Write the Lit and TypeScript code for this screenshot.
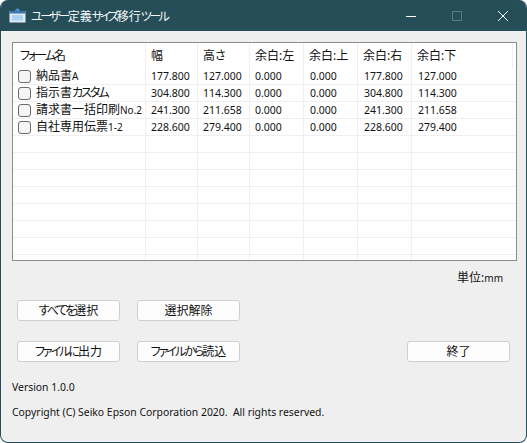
import { LitElement, html, css } from "lit";
import { customElement } from "lit/decorators.js";

const COLS = ["フォーム名", "幅", "高さ", "余白:左", "余白:上", "余白:右", "余白:下"];
const ROWS: [string, string, string[]][] = [
  ["納品書", "A", ["177.800", "127.000", "0.000", "0.000", "177.800", "127.000"]],
  ["指示書カスタム", "", ["304.800", "114.300", "0.000", "0.000", "304.800", "114.300"]],
  ["請求書一括印刷", "No.2", ["241.300", "211.658", "0.000", "0.000", "241.300", "211.658"]],
  ["自社専用伝票", "1-2", ["228.600", "279.400", "0.000", "0.000", "228.600", "279.400"]],
];
const BLANK = 8;

/* The reference UI font has narrow kana: tighten only the kana runs. */
const jp = (s: string) =>
  s.split(/([\u3040-\u30ff]+)/).map((part) =>
    /^[\u3040-\u30ff]/.test(part) ? html`<span class="k">${part}</span>` : part
  );

@customElement("app-root")
export class AppRoot extends LitElement {
  static styles = css`
    :host {
      display: block;
      width: 527px;
      height: 443px;
      background: #fff;
      font-family: "Noto Sans", "Noto Sans CJK JP", sans-serif;
      font-size: 10.4px;
      color: #111;
      font-feature-settings: "palt";
    }
    .k { letter-spacing: -2px; }
    .window {
      box-sizing: border-box;
      width: 527px;
      height: 443px;
      border: 1px solid #264e58;
      border-top: none;
      border-radius: 8px;
      background: #efefef;
      overflow: hidden;
      display: flex;
      flex-direction: column;
    }
    .titlebar {
      height: 31px;
      flex: none;
      background: #264e58;
      display: flex;
      align-items: center;
      color: #fff;
      padding-left: 8px;
    }
    .titlebar svg.app { flex: none; width: 17px; height: 15px; }
    .title { margin-left: 5px; font-size: 12px; color: #f4f7f8; flex: 1; }
    .title .k { letter-spacing: -2.5px; }
    .wbtn { flex: none; width: 46px; height: 31px; display: flex; align-items: center; justify-content: center; }
    .content {
      flex: 1;
      display: flex;
      flex-direction: column;
      padding: 11px 10px 0 11px;
    }
    .table {
      box-sizing: border-box;
      height: 219px;
      width: 505px;
      border: 1px solid #8c8c8c;
      background: #fff;
      overflow: hidden;
    }
    .row {
      display: grid;
      grid-template-columns: 133px 52px 52px 54px 54px 54px 101px;
      height: 17px;
      border-bottom: 1px solid #efefef;
      box-sizing: border-box;
    }
    .row.head { height: 25px; border-bottom: none; }
    .cell {
      border-right: 1px solid #efefef;
      padding-left: 6px;
      line-height: 17px;
      white-space: nowrap;
      overflow: hidden;
    }
    .row:not(.head) .cell:last-child { border-right: none; }
    .head .cell { line-height: 26px; font-size: 12px; padding-left: 5px; }
    .head .cell:first-child { padding-left: 7px; }
    .cell.num { padding-left: 5px; font-size: 10.5px; }
    .cell.num:nth-child(n + 5) { padding-left: 6px; }
    .name { display: flex; align-items: center; gap: 5px; padding-left: 5px; font-size: 12px; }
    .name small { font-size: 10px; }
    .check {
      box-sizing: border-box;
      flex: none;
      width: 13px;
      height: 13px;
      border: 1px solid #6b6b6b;
      border-radius: 3px;
      background: #f5f5f5;
    }
    .unit { align-self: flex-end; margin: 9px 13px 0 0; font-size: 12px; line-height: 16px; }
    .unit small { font-size: 10px; }
    .buttons { display: flex; gap: 17px; margin-left: 5px; }
    .buttons.r1 { margin-top: 14px; }
    .buttons.r2 { margin-top: 20px; }
    .spacer { width: 133px; }
    button {
      box-sizing: border-box;
      width: 103px;
      height: 21px;
      padding: 0;
      background: #fdfdfd;
      border: 1px solid #cfcfcf;
      border-radius: 3px;
      font: inherit;
      font-size: 12px;
      line-height: 18px;
      color: #111;
    }
    .version { margin-top: 17px; line-height: 16px; }
    .copy { margin-top: 9px; line-height: 16px; white-space: pre; }
  `;

  render() {
    return html`
      <div class="window">
        <div class="titlebar">
          <svg class="app" viewBox="0 0 17 15">
            <rect x="0.5" y="3" width="16" height="11.5" fill="#dfeaf4"/>
            <rect x="0.5" y="3" width="16" height="2.5" fill="#3f74ad"/>
            <rect x="3" y="7" width="11" height="5.5" fill="#a9d3f2"/>
            <path d="M8.5 0 L11.5 3 H5.5 Z" fill="#4f8fce"/>
          </svg>
          <div class="title">${jp("ユーザー定義サイズ移行ツール")}</div>
          <div class="wbtn">
            <svg width="12" height="12" viewBox="0 0 12 12"><path d="M1 6.5H11" stroke="#fff" stroke-width="1"/></svg>
          </div>
          <div class="wbtn">
            <svg width="12" height="12" viewBox="0 0 12 12"><rect x="1.5" y="1.5" width="9" height="9" fill="none" stroke="#5b7b83"/></svg>
          </div>
          <div class="wbtn">
            <svg width="12" height="12" viewBox="0 0 12 12"><path d="M1 1L11 11M11 1L1 11" stroke="#fff" stroke-width="1"/></svg>
          </div>
        </div>
        <div class="content">
          <div class="table">
            <div class="row head">${COLS.map((c) => html`<div class="cell">${jp(c)}</div>`)}</div>
            ${ROWS.map(
              ([name, latin, nums]) => html`<div class="row">
                <div class="cell name"><span class="check"></span><span>${jp(name)}<small>${latin}</small></span></div>
                ${nums.map((v) => html`<div class="cell num">${v}</div>`)}
              </div>`
            )}
            ${Array.from({ length: BLANK }).map(
              () => html`<div class="row">${COLS.map(() => html`<div class="cell"></div>`)}</div>`
            )}
          </div>
          <div class="unit">単位:<small>mm</small></div>
          <div class="buttons r1"><button>${jp("すべてを選択")}</button><button>選択解除</button></div>
          <div class="buttons r2">
            <button>${jp("ファイルに出力")}</button><button>${jp("ファイルから読込")}</button>
            <span class="spacer"></span><button>終了</button>
          </div>
          <div class="version">Version 1.0.0</div>
          <div class="copy">Copyright (C) Seiko Epson Corporation 2020.  All rights reserved.</div>
        </div>
      </div>
    `;
  }
}
